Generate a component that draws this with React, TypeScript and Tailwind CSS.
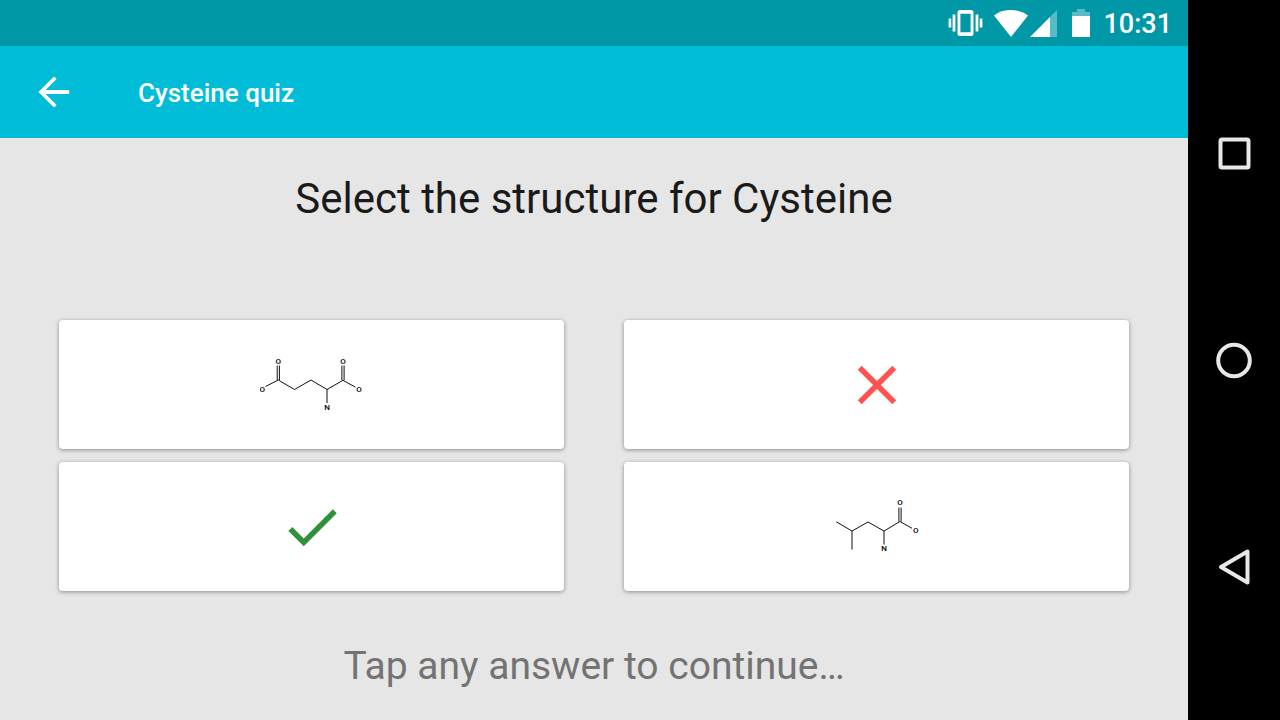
import type { ReactNode } from "react";

function StatusBar() {
  return (
    <div className="flex h-[46px] items-center justify-end bg-[#0097a7] pr-4 text-white">
      <svg className="mr-[10px] h-[26px] w-9" viewBox="0 0 36 26" fill="currentColor" aria-hidden="true">
        <path d="M12 0h11a2.500 2.500 0 0 1 2.500 2.500v21A2.500 2.500 0 0 1 23 26H12a2.500 2.500 0 0 1-2.500-2.500v-21A2.500 2.500 0 0 1 12 0Zm.4 3.800v18.400h10.200V3.800Z" fillRule="evenodd" />
        <path d="M4.600 4.600h2.800v16.800H4.600zM.6 8.600h2.600v8.800H.6zM27.600 4.600h2.800v16.800h-2.800zM31.800 8.600h2.600v8.800h-2.600z" />
      </svg>
      <svg className="mr-[2px] h-[27px] w-[34px]" viewBox="0 0 34 27" fill="currentColor" aria-hidden="true">
        <path d="M17 27 0 5.400C4.800 1.800 10.600 0 17 0s12.200 1.800 17 5.400Z" />
      </svg>
      <svg className="mr-[15px] h-[27px] w-[27px]" viewBox="0 0 27 27" fill="currentColor" aria-hidden="true">
        <path d="M20 7 27 0v27h-7Z" opacity=".35" />
        <path d="M20 7v20H0Z" />
      </svg>
      <svg className="mr-[13px] h-7 w-[18px]" viewBox="0 0 18 28" fill="currentColor" aria-hidden="true">
        <path d="M5 0h8v3h5v4H0V3h5Z" opacity=".35" />
        <path d="M0 7h18v21H0Z" />
      </svg>
      <time className="pt-[2px] text-[27px] leading-8 font-medium">10:31</time>
    </div>
  );
}

function AppBar() {
  return (
    <header className="flex h-[92px] items-center bg-[#00bcd7] pl-[30px] text-white">
      <button type="button" aria-label="Back" className="mr-[60px]">
        <svg className="h-12 w-12" viewBox="0 0 24 24" fill="currentColor" aria-hidden="true">
          <path d="M19.600 11H7.830l5.490-5.490L12 4.200 4.200 12l7.800 7.800 1.320-1.310L7.830 13H19.600v-2Z" />
        </svg>
      </button>
      <h1 className="pt-[2px] text-[26px] leading-8 font-medium">Cysteine quiz</h1>
    </header>
  );
}

function GlutamicAcid() {
  return (
    <svg className="h-[59px] w-[103px]" viewBox="0 0 103 59" role="img" aria-label="Glutamic acid">
      <path
        d="M5.500 31.500 18.300 25 34.500 34.500 51 25 67 34.500 83 25.300 95.500 32.200M67 34.500V48M17.200 25V10.500M19.400 25V10.500M81.900 25V10.500M84.100 25V10.500"
        fill="none"
        stroke="#111"
      />
      <g className="fill-black text-[8px] font-medium" textAnchor="middle">
        <text x="18.300" y="8.500">O</text>
        <text x="2.300" y="36.500">O</text>
        <text x="83" y="8.500">O</text>
        <text x="99" y="36.500">O</text>
        <text x="67" y="55">N</text>
      </g>
    </svg>
  );
}

function Leucine() {
  return (
    <svg className="h-[61px] w-[87px]" viewBox="0 0 87 61" role="img" aria-label="Leucine">
      <path
        d="M3.300 25.800 19 35 35 26 51 35 67 25.500 79 32.300M19 35V53.500M51 35V48.500M65.900 25.500V11.500M68.100 25.500V11.500"
        fill="none"
        stroke="#111"
      />
      <g className="fill-black text-[8px] font-medium" textAnchor="middle">
        <text x="67" y="9">O</text>
        <text x="82.800" y="37">O</text>
        <text x="51" y="55">N</text>
      </g>
    </svg>
  );
}

function Wrong() {
  return (
    <svg className="h-[66px] w-[66px]" viewBox="0 0 24 24" fill="#ff5252" role="img" aria-label="Wrong">
      <path d="M19 6.410 17.590 5 12 10.590 6.410 5 5 6.410 10.590 12 5 17.590 6.410 19 12 13.410 17.590 19 19 17.590 13.410 12Z" />
    </svg>
  );
}

function Correct() {
  return (
    <svg className="h-[66px] w-[66px]" viewBox="0 0 24 24" fill="#2f9138" role="img" aria-label="Correct">
      <path d="M9 16.170 4.830 12l-1.420 1.410L9 19 21 7l-1.410-1.410Z" />
    </svg>
  );
}

function Answer({ children }: { children: ReactNode }) {
  return (
    <button
      type="button"
      className="flex h-[129px] items-center justify-center rounded-[4px] bg-white shadow-[0_1px_4px_rgba(0,0,0,0.4)]"
    >
      {children}
    </button>
  );
}

function NavigationBar() {
  return (
    <nav className="flex w-[92px] shrink-0 flex-col items-center justify-center gap-[159px] bg-black text-[#e8e8e8]">
      <button type="button" aria-label="Recent apps">
        <svg className="h-12 w-12" viewBox="0 0 48 48" fill="none" stroke="currentColor" strokeWidth="4" aria-hidden="true">
          <rect x="10.500" y="10.500" width="28" height="28" rx="1.500" />
        </svg>
      </button>
      <button type="button" aria-label="Home">
        <svg className="h-12 w-12" viewBox="0 0 48 48" fill="none" stroke="currentColor" strokeWidth="4" aria-hidden="true">
          <circle cx="24" cy="24.500" r="15.800" />
        </svg>
      </button>
      <button type="button" aria-label="Back">
        <svg className="h-12 w-12" viewBox="0 0 48 48" fill="none" stroke="currentColor" strokeWidth="4" strokeLinejoin="round" aria-hidden="true">
          <path d="M37.500 8.500v31L11 24Z" />
        </svg>
      </button>
    </nav>
  );
}

export default function App() {
  return (
    <div className="flex min-h-screen bg-black font-[Roboto,sans-serif]">
      <div className="flex min-w-0 flex-1 flex-col bg-[#e6e6e6]">
        <StatusBar />
        <AppBar />
        <main className="flex flex-1 flex-col px-[59px] pt-9 text-center">
          <h2 className="text-[42px] leading-[50px] text-[#1a1a1a]">Select the structure for Cysteine</h2>
          <div className="mt-24 grid grid-cols-2 gap-x-[60px] gap-y-[13px]">
            <Answer><GlutamicAcid /></Answer>
            <Answer><Wrong /></Answer>
            <Answer><Correct /></Answer>
            <Answer><Leucine /></Answer>
          </div>
          <p className="mt-[51px] text-[39px] leading-[48px] text-[#737373]">Tap any answer to continue…</p>
        </main>
      </div>
      <NavigationBar />
    </div>
  );
}
